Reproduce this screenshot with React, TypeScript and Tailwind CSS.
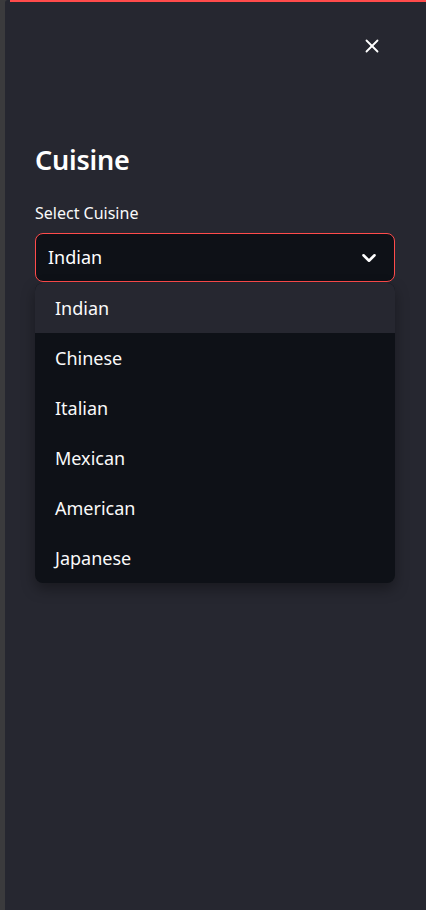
import { X, ChevronDown } from "lucide-react";

const cuisines = ["Indian", "Chinese", "Italian", "Mexican", "American", "Japanese"];

export default function App() {
  return (
    <div
      className="flex h-[910px] w-[426px] bg-[#3b3b3d] overflow-hidden"
      style={{ fontFamily: '"Noto Sans", "Open Sans", sans-serif' }}
    >
      <div className="w-[5px] shrink-0" />
      <div className="relative flex-1 flex flex-col bg-[#262730] text-white rounded-tl-[3px]">
        <div className="h-[2px] bg-[#ff4b4b] ml-[5px]" />

        <div className="flex justify-end pt-[33px] pr-[43px]">
          <X className="h-[22px] w-[22px] text-white" strokeWidth={2} />
        </div>

        <div className="pl-[30px] pr-[31px] pt-[87px]">
          <h2 className="text-[27px] leading-[32px] font-semibold tracking-[-0.2px]">Cuisine</h2>

          <label className="block mt-[26px] text-[16px] leading-[22px] text-[#fafafa]">Select Cuisine</label>

          <div className="relative mt-[9px]">
            <div className="flex items-center justify-between h-[49px] rounded-[8px] border border-[#ff4b4b] bg-[#0e1117] pl-[12px] pr-[14px]">
              <span className="text-[18px]">Indian</span>
              <ChevronDown className="h-[22px] w-[22px] text-white" strokeWidth={2.8} />
            </div>

            <ul className="absolute left-0 right-0 top-[50px] rounded-[8px] overflow-hidden bg-[#0e1117] shadow-[0_6px_14px_rgba(0,0,0,0.35)]">
              {cuisines.map((c, i) => (
                <li
                  key={c}
                  className={`flex items-center h-[50px] pl-[20px] text-[18px] text-[#fafafa] ${
                    i === 0 ? "bg-[#262730]" : ""
                  }`}
                >
                  {c}
                </li>
              ))}
            </ul>
          </div>
        </div>
      </div>
    </div>
  );
}
